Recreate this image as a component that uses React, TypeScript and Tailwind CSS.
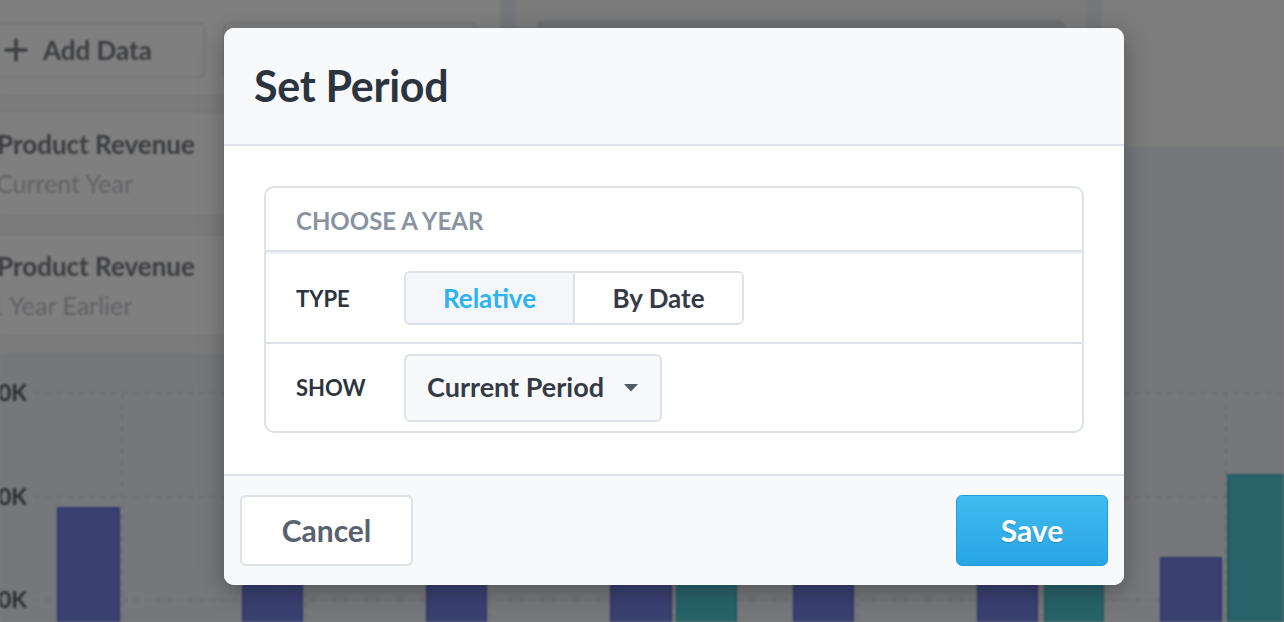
import React from "react";

const NAVY = [
  [57, 120, 507],
  [242, 303, 520],
  [426, 487, 520],
  [610, 672, 520],
  [793, 854, 520],
  [977, 1038, 520],
  [1160, 1222, 557],
];
const TEAL = [
  [676, 737, 520],
  [1044, 1104, 520],
  [1227, 1292, 474],
];
const HLINES = [393, 497, 600];
const VLINES = [122, 306, 490, 674, 858, 1042, 1226];

function ChartPiece({ x0, y0, w }: { x0: number; y0: number; w: number }) {
  const h = 622 - y0;
  return (
    <svg width={w} height={h} className="block">
      <g transform={`translate(${-x0},${-y0})`}>
        {HLINES.map((y) => (
          <line key={y} x1={34} x2={1290} y1={y} y2={y} stroke="#6b6d72" strokeWidth={1.5} strokeDasharray="6 5" />
        ))}
        {VLINES.map((x) => (
          <line key={x} x1={x} x2={x} y1={393} y2={640} stroke="#6b6d72" strokeWidth={1.5} strokeDasharray="6 5" />
        ))}
        {NAVY.map(([a, b, t]) => (
          <rect key={a} x={a + 1} y={t + 1} width={b - a - 2} height={700} fill="#3a4171" stroke="#30376a" strokeWidth={2} />
        ))}
        {TEAL.map(([a, b, t]) => (
          <rect key={a} x={a + 1} y={t + 1} width={b - a - 2} height={700} fill="#28636a" stroke="#225a61" strokeWidth={2} />
        ))}
        {HLINES.map((y) => (
          <text key={"t" + y} x={-2} y={y + 8} fontFamily="Lato, sans-serif" fontWeight={700} fontSize={23} fill="#2c2d30">
            0K
          </text>
        ))}
      </g>
    </svg>
  );
}

function Background() {
  return (
    <div className="flex h-full blur-[1px]">
      {/* left column */}
      <div className="flex w-[500px] flex-col">
        <div className="flex h-[353px] flex-col bg-[#7f7f7f]">
          <div className="flex h-[95px] items-start gap-[18px] pt-[22px]">
            <div className="ml-[-12px] flex h-[56px] w-[217px] items-center gap-[15px] rounded-[6px] border-2 border-[#747474] pl-[14px]">
              <svg width="24" height="24" viewBox="0 0 24 24">
                <path d="M12 2v20M2 12h20" stroke="#3b3c3f" strokeWidth="3.5" strokeLinecap="round" />
              </svg>
              <span className="text-[26px] font-bold text-[#3b3c3f]">Add Data</span>
            </div>
            <div className="h-[56px] w-[253px] rounded-[6px] border-2 border-[#747474]" />
          </div>
          <div className="h-[17px] border-y border-[#757575] bg-[#7b7b7b]" />
          <div className="flex h-[103px] flex-col justify-center gap-[8px] pb-[2px]">
            <span className="ml-[-3px] text-[26px] leading-[32px] font-bold text-[#3b3c3f]">Product Revenue</span>
            <span className="ml-[-4px] text-[25px] leading-[30px] text-[#606164]">Current Year</span>
          </div>
          <div className="h-[20px] border-y border-[#757575] bg-[#7b7b7b]" />
          <div className="flex h-[100px] flex-col justify-center gap-[8px]">
            <span className="ml-[-3px] text-[26px] leading-[32px] font-bold text-[#3b3c3f]">Product Revenue</span>
            <span className="ml-[-11px] text-[25px] leading-[30px] text-[#606164]">1 Year Earlier</span>
          </div>
          <div className="flex-1 border-t border-[#757575] bg-[#7b7b7b]" />
        </div>
        <div className="flex-1 bg-[#76777b]">
          <ChartPiece x0={0} y0={353} w={500} />
        </div>
      </div>
      {/* middle column */}
      <div className="flex w-[602px] flex-col">
        <div className="flex h-[147px]">
          <div className="w-[16px] bg-[#75777a]" />
          <div className="flex-1 bg-[#7b7b7b] px-[21px] pt-[20px]">
            <div className="h-full rounded-t-[6px] bg-[#6f7173]" />
          </div>
          <div className="w-[16px] bg-[#75777a]" />
        </div>
        <div className="flex-1 bg-[#76777b]">
          <ChartPiece x0={500} y0={147} w={602} />
        </div>
      </div>
      {/* right column */}
      <div className="flex flex-1 flex-col">
        <div className="h-[147px] bg-[#7c7c7c]" />
        <div className="flex-1 bg-[#76777b]">
          <ChartPiece x0={1102} y0={147} w={182} />
        </div>
      </div>
    </div>
  );
}

export default function App() {
  return (
    <div
      className="relative h-[622px] w-[1284px] overflow-hidden bg-[#7e7e7e]"
      style={{ fontFamily: "Lato, 'Noto Sans', sans-serif" }}
    >
      <Background />
      {/* modal */}
      <div className="absolute left-[224px] top-[28px] w-[900px] overflow-hidden rounded-[10px] bg-white shadow-[0_6px_24px_rgba(0,0,0,0.3)]">
        <div className="flex h-[118px] items-center border-b-2 border-[#dde1e8] bg-[#f8f9fb] px-[30px]">
          <h1 className="text-[43px] font-bold tracking-[-0.3px] text-[#2c3440]">Set Period</h1>
        </div>
        <div className="bg-white px-[40px] pt-[40px] pb-[41px]">
          <div className="rounded-[10px] border-2 border-[#dde1e8]">
            <div className="flex h-[64px] items-center border-b-2 border-[#dde1e8] px-[30px] pt-[3px]">
              <span className="text-[24px] font-bold text-[#8994a1]">CHOOSE A YEAR</span>
            </div>
            <div className="flex h-[92px] items-center border-t-2 border-b-2 border-t-[#eef1f5] border-b-[#dde1e8] px-[30px]">
              <span className="w-[108px] text-[22px] font-bold text-[#2c3440]">TYPE</span>
              <div className="flex h-[54px] w-[340px] overflow-hidden rounded-[6px] border-2 border-[#dde1e8]">
                <div className="flex flex-1 items-center justify-center border-r-2 border-[#dde1e8] bg-[#f4f6f9] text-[26px] font-bold text-[#2db3ee]">
                  Relative
                </div>
                <div className="flex flex-1 items-center justify-center bg-white text-[26px] font-bold text-[#343b47]">
                  By Date
                </div>
              </div>
            </div>
            <div className="flex h-[87px] items-center px-[30px]">
              <span className="w-[108px] text-[22px] font-bold text-[#2c3440]">SHOW</span>
              <div className="flex h-[68px] w-[258px] items-center justify-between rounded-[6px] border-2 border-[#dde1e8] bg-[#f8f9fb] pl-[21px] pr-[22px]">
                <span className="text-[27px] font-bold text-[#343b47]">Current Period</span>
                <svg width="14" height="8" viewBox="0 0 14 8">
                  <path d="M0 0h14L7 7.5z" fill="#525966" />
                </svg>
              </div>
            </div>
          </div>
        </div>
        <div className="flex h-[111px] items-center justify-between border-t-2 border-[#dde1e8] bg-[#f8f9fb] px-[16px]">
          <button className="flex h-[71px] w-[173px] items-center justify-center rounded-[6px] border-2 border-[#dde1e8] bg-white text-[30px] font-bold text-[#58626f]">
            Cancel
          </button>
          <button className="flex h-[71px] w-[152px] items-center justify-center rounded-[6px] border border-[#249dd8] bg-gradient-to-b from-[#40bbf0] to-[#27a5e5] text-[30px] font-bold text-white [text-shadow:0_1px_1px_rgba(0,0,0,0.2)]">
            Save
          </button>
        </div>
      </div>
    </div>
  );
}
